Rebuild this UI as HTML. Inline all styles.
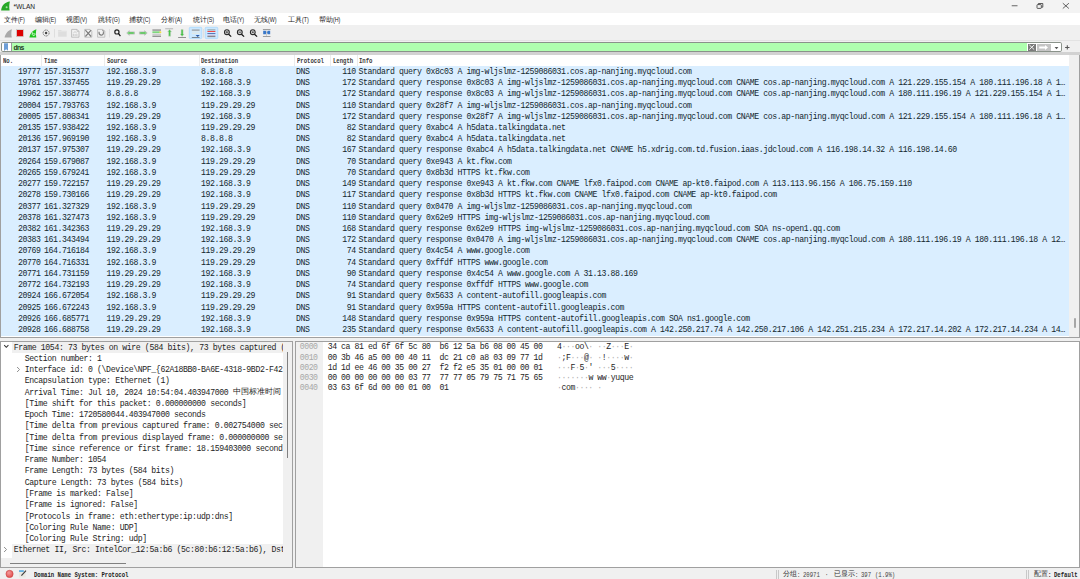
<!DOCTYPE html>
<html><head><meta charset="utf-8"><style>
*{margin:0;padding:0;box-sizing:border-box}
html,body{width:1080px;height:579px;overflow:hidden;background:#f0f0f0;font-family:"Liberation Sans",sans-serif}
.abs{position:absolute}
#title{position:absolute;left:0;top:0;width:1080px;height:12.8px;background:#f3f3f3}
#title .t{position:absolute;left:13.5px;top:2.5px;font-size:6.6px;color:#222;line-height:8px}
#menu{position:absolute;left:0;top:13px;width:1080px;height:12px;background:#fff}
.mi{position:absolute;top:2.5px;font-size:7.1px;line-height:9px;color:#1a1a1a;white-space:nowrap}
.mk{display:inline-block;position:relative;top:-0.9px;font-size:7.6px;line-height:9px;vertical-align:top;transform:scaleX(0.7);transform-origin:0 50%}
#tb{position:absolute;left:0;top:25px;width:1080px;height:15.5px;background:#f0f0f0;border-bottom:1px solid #e3e3e3}
#filter{position:absolute;left:0;top:40.5px;width:1080px;height:14px;background:#f0f0f0}
#fbox{position:absolute;left:0.8px;top:1.7px;width:1061.5px;height:9.8px;border:1px solid #8a928a;border-radius:1.8px;background:#fff}
#fgreen{position:absolute;left:10px;top:0;width:1015.4px;height:100%;background:#afffaf}
#plist{position:absolute;left:0;top:54.5px;width:1080px;height:283.5px;background:#fff;border:1px solid #a0a0a0;border-top:none;overflow:hidden}
#hdr{position:absolute;left:0;top:0;width:1068.4px;height:11.4px;background:#fff}
.hd{position:absolute;top:2px;font-family:"Liberation Mono",monospace;font-weight:bold;font-size:7.6px;line-height:8px;color:#3a3a3a;white-space:nowrap;transform:scaleX(0.74);transform-origin:0 50%}
.hs{position:absolute;top:0;width:0.8px;height:11.4px;background:#ececec}
.pr{position:absolute;left:0;width:1068.4px;height:12px;background:#daeeff;font-family:"Liberation Mono",monospace;font-size:8.2px;line-height:11.22px;color:#12272e;white-space:nowrap;letter-spacing:-0.415px}
.pr .c{position:absolute;top:0}
.no{right:1029px;text-align:right}
.tm{left:42.9px}
.src{left:105.6px}
.dst{left:200.1px}
.pro{left:295px}
.len{right:713.6px;text-align:right}
.inf{left:357.5px}
#vsb{position:absolute;left:1068.4px;top:0;width:10.6px;height:283px;background:#f0f0f0}
#details{position:absolute;left:0;top:340.8px;width:292.5px;height:227.2px;background:#fff;border:1px solid #a0a0a0;overflow:hidden}
.dr{position:absolute;left:0;width:282px;height:11.26px;font-family:"Liberation Mono",monospace;font-size:8.2px;line-height:11.26px;color:#1e1e1e;white-space:nowrap;letter-spacing:-0.39px}
.dr.bg::before{content:"";position:absolute;left:11px;top:0;width:271px;height:100%;background:#f0f0f0}
.dt{position:absolute;top:0}
.dr.tall::before{height:14px}
.cjk{font-family:"Liberation Sans",sans-serif;font-size:8.4px;letter-spacing:0.05px;position:relative;top:-0.5px}
.dot{color:#b0b0b0;font-style:normal}
.arr{position:absolute}
#bytes{position:absolute;left:295px;top:340.8px;width:785px;height:227.2px;background:#fff;border:1px solid #a0a0a0;overflow:hidden}
#offbg{position:absolute;left:0;top:0;width:27px;height:100%;background:#f0f0f0}
.hr{position:absolute;left:0;width:780px;height:10.15px;font-family:"Liberation Mono",monospace;font-size:8.2px;line-height:10.15px;color:#1e1e1e;white-space:nowrap;letter-spacing:-0.44px}
.hr span{position:absolute;top:0;white-space:pre}
.ho{left:3.7px;color:#a8a8a8}
.hx{left:31.7px}
.ha{left:261px}
#status{position:absolute;left:0;top:568px;width:1080px;height:11px;background:#f0f0f0}
.st{position:absolute;top:2.8px;font-family:"Liberation Mono",monospace;font-weight:bold;font-size:7.6px;line-height:8px;color:#222;white-space:nowrap;transform:scaleX(0.74);transform-origin:0 50%}
.sc{position:absolute;top:2.2px;font-size:6.9px;line-height:8px;color:#333;white-space:nowrap}
</style></head><body>
<div id="title">
<svg class="abs" style="left:0;top:0" width="12" height="12" viewBox="0 0 12 12"><path d="M1.1 10.6 C1.6 5.6 5 2.2 9.9 1.6 C9.1 4.5 9.1 7.8 9.6 10.6 Z" fill="#27a827"/><circle cx="6.6" cy="7.2" r="1" fill="#a8e0a8"/></svg>
<span class="t">*WLAN</span>
<svg class="abs" style="left:0;top:0" width="1080" height="13" viewBox="0 0 1080 13">
<rect x="1011.7" y="5.4" width="5.8" height="0.8" fill="#444"/>
<rect x="1037" y="4.6" width="4.3" height="3.8" rx="0.6" fill="none" stroke="#333" stroke-width="0.8"/>
<path d="M1038.4 4.5 V3.5 H1042.8 V7.2 H1041.6" fill="none" stroke="#333" stroke-width="0.8"/>
<path d="M1062.8 3.2 L1068.9 8.5 M1068.9 3.2 L1062.8 8.5" stroke="#333" stroke-width="0.75"/>
</svg>
</div>
<div id="menu"><span class="mi" style="left:4px">文件<span class="mk">(F)</span></span><span class="mi" style="left:35px">编辑<span class="mk">(E)</span></span><span class="mi" style="left:66px">视图<span class="mk">(V)</span></span><span class="mi" style="left:97.5px">跳转<span class="mk">(G)</span></span><span class="mi" style="left:129px">捕获<span class="mk">(C)</span></span><span class="mi" style="left:161px">分析<span class="mk">(A)</span></span><span class="mi" style="left:192.5px">统计<span class="mk">(S)</span></span><span class="mi" style="left:223px">电话<span class="mk">(Y)</span></span><span class="mi" style="left:254px">无线<span class="mk">(W)</span></span><span class="mi" style="left:288px">工具<span class="mk">(T)</span></span><span class="mi" style="left:319px">帮助<span class="mk">(H)</span></span></div>
<div id="tb"><svg style="position:absolute;left:0;top:0" width="280" height="16" viewBox="0 25 280 16">
<!-- 1 gray fin -->
<path d="M4.6 37.4 C5.5 33.5 8 30.2 11.9 29.2 C11.2 31.8 11.2 34.8 11.8 37.4 Z" fill="#a9a9a9"/>
<!-- 2 red square -->
<rect x="16.4" y="29.5" width="7.2" height="7.2" fill="none" stroke="#c8c8c8" stroke-width="0.7"/>
<rect x="16.9" y="30" width="6.2" height="6.2" fill="#dd0000"/>
<!-- 3 green fin -->
<path d="M29.4 37.4 C30.2 33.6 32.6 30.3 36.4 29.3 C35.8 31.8 35.8 34.8 36.3 37.4 Z" fill="#21c421"/>
<path d="M32.4 33.6 A1.4 1.4 0 1 0 34.6 33.2" fill="none" stroke="#e8ffe8" stroke-width="0.8"/>
<path d="M32.3 32 V33.8 H34" fill="none" stroke="#e8ffe8" stroke-width="0.7"/>
<!-- 4 gear -->
<circle cx="46.1" cy="33" r="3" fill="none" stroke="#777" stroke-width="1" stroke-dasharray="1.3 0.5"/>
<circle cx="46.1" cy="33" r="1.2" fill="#444"/>
<!-- sep -->
<rect x="54.1" y="29" width="0.7" height="8.5" fill="#d6d6d6"/>
<!-- 5 folder -->
<path d="M58.1 30 H61 L61.8 30.8 H66.7 V36.7 H58.1 Z" fill="#dedede"/>
<rect x="58.1" y="30.9" width="8.6" height="0.6" fill="#e9e9e9"/>
<!-- 6 file -->
<path d="M71.6 29.4 H77 L79 31.4 V37.2 H71.6 Z" fill="#f2f2f2" stroke="#b4b4b4" stroke-width="0.8"/>
<path d="M77 29.4 V31.4 H79" fill="none" stroke="#b4b4b4" stroke-width="0.6"/>
<path d="M72.8 35 h1 M74.6 35 h1 M76.4 35 h1" stroke="#9a9a9a" stroke-width="0.9"/>
<path d="M73.3 33 L75 31.6 L76.7 33" fill="none" stroke="#bdbdbd" stroke-width="0.7"/>
<!-- 7 x file -->
<path d="M84.7 29.4 H90 L91.8 31.2 V37.2 H84.7 Z" fill="#f2f2f2" stroke="#b4b4b4" stroke-width="0.8"/>
<path d="M85.4 30.2 L91.1 36.5 M91.1 30.2 L85.4 36.5" stroke="#7a7a7a" stroke-width="1.15"/>
<!-- 8 reload file -->
<path d="M97.6 29.4 H103 L104.8 31.2 V37.2 H97.6 Z" fill="#f2f2f2" stroke="#b4b4b4" stroke-width="0.8"/>
<path d="M99.3 31.8 A2.2 2.2 0 1 0 103.3 32.2" fill="none" stroke="#7a7a7a" stroke-width="1.2"/>
<path d="M102 30.6 L103.8 30.8 L103.5 32.8" fill="none" stroke="#7a7a7a" stroke-width="0.7"/>
<!-- sep -->
<rect x="109.3" y="29" width="0.7" height="8.5" fill="#d6d6d6"/>
<!-- 9 magnifier -->
<circle cx="116.9" cy="31.9" r="2.1" fill="none" stroke="#222" stroke-width="1.2"/>
<path d="M118.4 33.4 L120.4 36.2" stroke="#111" stroke-width="1.2"/>
<!-- 10 left arrow -->
<path d="M126.7 33 L129.3 30.7 V31.9 H134.5 V34.1 H129.3 V35.3 Z" fill="#8fdc8f" stroke="#b8b8b8" stroke-width="0.7"/>
<path d="M128.6 33 h5" stroke="#4cbf4c" stroke-width="1.1"/>
<!-- 11 right arrow -->
<path d="M147.2 33 L144.6 30.7 V31.9 H139.4 V34.1 H144.6 V35.3 Z" fill="#8fdc8f" stroke="#b8b8b8" stroke-width="0.7"/>
<path d="M140.3 33 h5" stroke="#4cbf4c" stroke-width="1.1"/>
<!-- 12 jump list -->
<rect x="152.4" y="29.5" width="8.6" height="1.1" fill="#7a7a7a"/>
<rect x="152.4" y="31.3" width="7.4" height="1.8" fill="#7fd87f"/>
<circle cx="160.4" cy="32.2" r="0.95" fill="#f2e040"/>
<rect x="152.4" y="33.8" width="8.6" height="0.9" fill="#bdbdbd"/>
<rect x="152.4" y="35.6" width="8.6" height="1.3" fill="#8a8a8a"/>
<!-- 13 up arrow -->
<rect x="165.2" y="28.5" width="7.9" height="0.7" fill="#9a9a9a"/>
<path d="M169.6 29.5 L171.6 31.8 H170.6 V36.2 H168.6 V31.8 H167.6 Z" fill="#43c443" stroke="#cfcfcf" stroke-width="0.5"/>
<!-- 14 down arrow -->
<rect x="178.1" y="37.2" width="7.9" height="0.8" fill="#7a7a7a"/>
<path d="M182.1 36.4 L184.1 34 H183.1 V29.6 H181.1 V34 H180.1 Z" fill="#43c443" stroke="#cfcfcf" stroke-width="0.5"/>
<!-- 15 autoscroll button -->
<rect x="189.3" y="27.3" width="12.5" height="11.3" rx="1" fill="#cce8ff" stroke="#99d1ff" stroke-width="0.6"/>
<rect x="191.8" y="29.5" width="7.8" height="1.2" fill="#9a9a9a"/>
<rect x="191.8" y="31.5" width="7.8" height="0.8" fill="#e8e8e0"/>
<rect x="191.8" y="33.2" width="7.8" height="0.8" fill="#e8e8e0"/>
<path d="M195.6 35 H199.8 L197.7 37 Z" fill="#2a5aa8"/>
<rect x="191.8" y="37.2" width="7.8" height="0.6" fill="#444"/>
<!-- sep -->
<rect x="203.3" y="29" width="0.6" height="8.5" fill="#d6d6d6"/>
<!-- 16 colorize -->
<rect x="205.2" y="27.3" width="12.6" height="11.3" rx="1" fill="#cce8ff" stroke="#99d1ff" stroke-width="0.6"/>
<rect x="207.4" y="29.4" width="8" height="1" fill="#8fa0a0"/>
<rect x="207.4" y="31" width="8" height="1" fill="#f04a4a"/>
<rect x="207.4" y="33" width="8" height="0.9" fill="#4a6ab0"/>
<rect x="207.4" y="34.8" width="8" height="1" fill="#c0a8c8"/>
<rect x="207.4" y="36.1" width="8" height="1" fill="#808080"/>
<!-- 17-19 zooms -->
<g fill="#dcdcdc" stroke="#2a2a2a">
<circle cx="226.9" cy="32.2" r="2.4" stroke-width="1.1"/>
<circle cx="239.8" cy="32.2" r="2.4" stroke-width="1.1"/>
<circle cx="252.8" cy="32.2" r="2.4" stroke-width="1.1"/>
</g>
<g stroke="#111" stroke-width="1.2">
<path d="M228.6 34.2 L231.2 36.6"/><path d="M241.5 34.2 L244.1 36.6"/><path d="M254.5 34.2 L257.1 36.6"/>
</g>
<path d="M225.7 32.2 h2.4 M226.9 31 v2.4" stroke="#333" stroke-width="0.7"/>
<path d="M238.6 32.2 h2.4" stroke="#333" stroke-width="0.8"/>
<rect x="251.9" y="31.4" width="1.8" height="1.6" fill="#555"/>
<!-- 20 resize columns -->
<rect x="262.9" y="29.2" width="7.6" height="0.8" fill="#8a8a8a"/>
<rect x="262.9" y="36.1" width="7.6" height="0.8" fill="#8a8a8a"/>
<path d="M263.2 30.8 H265.8 L266.3 32.5 L265.8 34.3 H263.2 Z" fill="#3a78c8"/>
<path d="M270.2 30.8 H267.6 L267.1 32.5 L267.6 34.3 H270.2 Z" fill="#3a78c8"/>
<rect x="266.5" y="30.5" width="0.5" height="5.5" fill="#aaa"/>
</svg>
</div>
<div id="filter">
<div id="fbox"><div style="position:absolute;left:2.2px;top:0px;width:4.4px;height:7.8px;background:#6d9ed6;clip-path:polygon(0 0,100% 0,100% 100%,50% 78%,0 100%)"></div><div style="position:absolute;left:9.2px;top:0;width:0.8px;height:100%;background:#9a9a9a"></div>
<div id="fgreen"><span style="position:absolute;left:1.6px;top:-0.6px;font-family:'Liberation Sans',sans-serif;font-weight:bold;font-size:6.8px;line-height:9px;color:#1e3a1e;letter-spacing:-0.55px">dns</span></div>
<div style="position:absolute;left:1026.3px;top:1.2px;width:7.5px;height:6.5px;background:#7a7a7a"><svg style="position:absolute;left:0;top:0" width="7.5" height="6.5" viewBox="0 0 7.5 6.5"><path d="M1.3 0.9 L6.2 5.6 M6.2 0.9 L1.3 5.6" stroke="#fff" stroke-width="0.9"/></svg></div>
<div style="position:absolute;left:1035.6px;top:0.9px;width:13.2px;height:7px;background:#c4c4c4"><svg style="position:absolute;left:0;top:0" width="13" height="7" viewBox="0 0 13 7"><path d="M2.2 2.6 H8 V1.1 L11 3.5 L8 5.9 V4.4 H2.2 Z" fill="#fff"/></svg></div>
<svg style="position:absolute;left:1052.6px;top:2.8px" width="5" height="4" viewBox="0 0 5 4"><path d="M0.6 1 H4.4 L2.5 3.2 Z" fill="#555"/></svg>
</div>
<svg class="abs" style="left:1064.6px;top:4.6px" width="5" height="5" viewBox="0 0 5 5"><path d="M2.3 0.2 V4.6 M0.1 2.4 H4.5" stroke="#555" stroke-width="1.05"/></svg><div class="abs" style="left:0;top:11.6px;width:1080px;height:2.5px;background:#d2d2d2"></div>
</div>
<div id="plist">
<div id="hdr">
<span class="hd" style="left:1.90px">No.</span>
<span class="hs" style="left:40px"></span>
<span class="hd" style="left:43.40px">Time</span>
<span class="hs" style="left:103.3px"></span>
<span class="hd" style="left:106.40px">Source</span>
<span class="hs" style="left:198.3px"></span>
<span class="hd" style="left:200.30px">Destination</span>
<span class="hs" style="left:293px"></span>
<span class="hd" style="left:295.60px">Protocol</span>
<span class="hs" style="left:328.7px"></span>
<span class="hd" style="left:331.70px">Length</span>
<span class="hs" style="left:355.5px"></span>
<span class="hd" style="left:358.10px">Info</span>
</div>
<div style="position:absolute;left:0;top:-54.5px">
<div class="pr" style="top:65.90px"><span class="c no">19777</span><span class="c tm">157.315377</span><span class="c src">192.168.3.9</span><span class="c dst">8.8.8.8</span><span class="c pro">DNS</span><span class="c len">110</span><span class="c inf">Standard query 0x8c03 A img-wljslmz-1259086031.cos.ap-nanjing.myqcloud.com</span></div>
<div class="pr" style="top:77.12px"><span class="c no">19781</span><span class="c tm">157.337455</span><span class="c src">119.29.29.29</span><span class="c dst">192.168.3.9</span><span class="c pro">DNS</span><span class="c len">172</span><span class="c inf">Standard query response 0x8c03 A img-wljslmz-1259086031.cos.ap-nanjing.myqcloud.com CNAME cos.ap-nanjing.myqcloud.com A 121.229.155.154 A 180.111.196.18 A 1…</span></div>
<div class="pr" style="top:88.34px"><span class="c no">19962</span><span class="c tm">157.388774</span><span class="c src">8.8.8.8</span><span class="c dst">192.168.3.9</span><span class="c pro">DNS</span><span class="c len">172</span><span class="c inf">Standard query response 0x8c03 A img-wljslmz-1259086031.cos.ap-nanjing.myqcloud.com CNAME cos.ap-nanjing.myqcloud.com A 180.111.196.19 A 121.229.155.154 A 1…</span></div>
<div class="pr" style="top:99.56px"><span class="c no">20004</span><span class="c tm">157.793763</span><span class="c src">192.168.3.9</span><span class="c dst">119.29.29.29</span><span class="c pro">DNS</span><span class="c len">110</span><span class="c inf">Standard query 0x28f7 A img-wljslmz-1259086031.cos.ap-nanjing.myqcloud.com</span></div>
<div class="pr" style="top:110.78px"><span class="c no">20005</span><span class="c tm">157.808341</span><span class="c src">119.29.29.29</span><span class="c dst">192.168.3.9</span><span class="c pro">DNS</span><span class="c len">172</span><span class="c inf">Standard query response 0x28f7 A img-wljslmz-1259086031.cos.ap-nanjing.myqcloud.com CNAME cos.ap-nanjing.myqcloud.com A 121.229.155.154 A 180.111.196.18 A 1…</span></div>
<div class="pr" style="top:122.00px"><span class="c no">20135</span><span class="c tm">157.938422</span><span class="c src">192.168.3.9</span><span class="c dst">119.29.29.29</span><span class="c pro">DNS</span><span class="c len">82</span><span class="c inf">Standard query 0xabc4 A h5data.talkingdata.net</span></div>
<div class="pr" style="top:133.22px"><span class="c no">20136</span><span class="c tm">157.969190</span><span class="c src">192.168.3.9</span><span class="c dst">8.8.8.8</span><span class="c pro">DNS</span><span class="c len">82</span><span class="c inf">Standard query 0xabc4 A h5data.talkingdata.net</span></div>
<div class="pr" style="top:144.44px"><span class="c no">20137</span><span class="c tm">157.975307</span><span class="c src">119.29.29.29</span><span class="c dst">192.168.3.9</span><span class="c pro">DNS</span><span class="c len">167</span><span class="c inf">Standard query response 0xabc4 A h5data.talkingdata.net CNAME h5.xdrig.com.td.fusion.iaas.jdcloud.com A 116.198.14.32 A 116.198.14.60</span></div>
<div class="pr" style="top:155.66px"><span class="c no">20264</span><span class="c tm">159.679087</span><span class="c src">192.168.3.9</span><span class="c dst">119.29.29.29</span><span class="c pro">DNS</span><span class="c len">70</span><span class="c inf">Standard query 0xe943 A kt.fkw.com</span></div>
<div class="pr" style="top:166.88px"><span class="c no">20265</span><span class="c tm">159.679241</span><span class="c src">192.168.3.9</span><span class="c dst">119.29.29.29</span><span class="c pro">DNS</span><span class="c len">70</span><span class="c inf">Standard query 0x8b3d HTTPS kt.fkw.com</span></div>
<div class="pr" style="top:178.10px"><span class="c no">20277</span><span class="c tm">159.722157</span><span class="c src">119.29.29.29</span><span class="c dst">192.168.3.9</span><span class="c pro">DNS</span><span class="c len">149</span><span class="c inf">Standard query response 0xe943 A kt.fkw.com CNAME lfx0.faipod.com CNAME ap-kt0.faipod.com A 113.113.96.156 A 106.75.159.110</span></div>
<div class="pr" style="top:189.32px"><span class="c no">20278</span><span class="c tm">159.730166</span><span class="c src">119.29.29.29</span><span class="c dst">192.168.3.9</span><span class="c pro">DNS</span><span class="c len">117</span><span class="c inf">Standard query response 0x8b3d HTTPS kt.fkw.com CNAME lfx0.faipod.com CNAME ap-kt0.faipod.com</span></div>
<div class="pr" style="top:200.54px"><span class="c no">20377</span><span class="c tm">161.327329</span><span class="c src">192.168.3.9</span><span class="c dst">119.29.29.29</span><span class="c pro">DNS</span><span class="c len">110</span><span class="c inf">Standard query 0x0470 A img-wljslmz-1259086031.cos.ap-nanjing.myqcloud.com</span></div>
<div class="pr" style="top:211.76px"><span class="c no">20378</span><span class="c tm">161.327473</span><span class="c src">192.168.3.9</span><span class="c dst">119.29.29.29</span><span class="c pro">DNS</span><span class="c len">110</span><span class="c inf">Standard query 0x62e9 HTTPS img-wljslmz-1259086031.cos.ap-nanjing.myqcloud.com</span></div>
<div class="pr" style="top:222.98px"><span class="c no">20382</span><span class="c tm">161.342363</span><span class="c src">119.29.29.29</span><span class="c dst">192.168.3.9</span><span class="c pro">DNS</span><span class="c len">168</span><span class="c inf">Standard query response 0x62e9 HTTPS img-wljslmz-1259086031.cos.ap-nanjing.myqcloud.com SOA ns-open1.qq.com</span></div>
<div class="pr" style="top:234.20px"><span class="c no">20383</span><span class="c tm">161.343494</span><span class="c src">119.29.29.29</span><span class="c dst">192.168.3.9</span><span class="c pro">DNS</span><span class="c len">172</span><span class="c inf">Standard query response 0x0470 A img-wljslmz-1259086031.cos.ap-nanjing.myqcloud.com CNAME cos.ap-nanjing.myqcloud.com A 180.111.196.19 A 180.111.196.18 A 12…</span></div>
<div class="pr" style="top:245.42px"><span class="c no">20769</span><span class="c tm">164.716184</span><span class="c src">192.168.3.9</span><span class="c dst">119.29.29.29</span><span class="c pro">DNS</span><span class="c len">74</span><span class="c inf">Standard query 0x4c54 A www.google.com</span></div>
<div class="pr" style="top:256.64px"><span class="c no">20770</span><span class="c tm">164.716331</span><span class="c src">192.168.3.9</span><span class="c dst">119.29.29.29</span><span class="c pro">DNS</span><span class="c len">74</span><span class="c inf">Standard query 0xffdf HTTPS www.google.com</span></div>
<div class="pr" style="top:267.86px"><span class="c no">20771</span><span class="c tm">164.731159</span><span class="c src">119.29.29.29</span><span class="c dst">192.168.3.9</span><span class="c pro">DNS</span><span class="c len">90</span><span class="c inf">Standard query response 0x4c54 A www.google.com A 31.13.88.169</span></div>
<div class="pr" style="top:279.08px"><span class="c no">20772</span><span class="c tm">164.732193</span><span class="c src">119.29.29.29</span><span class="c dst">192.168.3.9</span><span class="c pro">DNS</span><span class="c len">74</span><span class="c inf">Standard query response 0xffdf HTTPS www.google.com</span></div>
<div class="pr" style="top:290.30px"><span class="c no">20924</span><span class="c tm">166.672054</span><span class="c src">192.168.3.9</span><span class="c dst">119.29.29.29</span><span class="c pro">DNS</span><span class="c len">91</span><span class="c inf">Standard query 0x5633 A content-autofill.googleapis.com</span></div>
<div class="pr" style="top:301.52px"><span class="c no">20925</span><span class="c tm">166.672243</span><span class="c src">192.168.3.9</span><span class="c dst">119.29.29.29</span><span class="c pro">DNS</span><span class="c len">91</span><span class="c inf">Standard query 0x959a HTTPS content-autofill.googleapis.com</span></div>
<div class="pr" style="top:312.74px"><span class="c no">20926</span><span class="c tm">166.685771</span><span class="c src">119.29.29.29</span><span class="c dst">192.168.3.9</span><span class="c pro">DNS</span><span class="c len">148</span><span class="c inf">Standard query response 0x959a HTTPS content-autofill.googleapis.com SOA ns1.google.com</span></div>
<div class="pr" style="top:323.96px"><span class="c no">20928</span><span class="c tm">166.688758</span><span class="c src">119.29.29.29</span><span class="c dst">192.168.3.9</span><span class="c pro">DNS</span><span class="c len">235</span><span class="c inf">Standard query response 0x5633 A content-autofill.googleapis.com A 142.250.217.74 A 142.250.217.106 A 142.251.215.234 A 172.217.14.202 A 172.217.14.234 A 14…</span></div>
</div>
<div id="vsb"><div style="position:absolute;left:4.5px;top:263px;width:2.2px;height:10px;border-radius:1px;background:#a6a6a6"></div></div>
</div>
<div id="details">
<div style="position:absolute;left:0;top:-341.8px">
<div class="dr bg" style="top:341.60px"><svg class="arr" style="left:1.6px;top:2.6px" width="7" height="5" viewBox="0 0 7 5"><path d="M1.2 1.2 L3.3 3.3 L5.4 1.2" fill="none" stroke="#333" stroke-width="1.05"/></svg><span class="dt" style="left:12.7px">Frame 1054: 73 bytes on wire (584 bits), 73 bytes captured (</span></div>
<div class="dr" style="top:352.86px"><span class="dt" style="left:23.7px">Section number: 1</span></div>
<div class="dr" style="top:364.12px"><svg class="arr" style="left:14.5px;top:2px" width="5" height="7" viewBox="0 0 5 7"><path d="M1.1 1 L3.5 3.5 L1.1 6" fill="none" stroke="#888" stroke-width="0.95"/></svg><span class="dt" style="left:23.7px">Interface id: 0 (\Device\NPF_{62A18BB0-BA6E-4318-9BD2-F42</span></div>
<div class="dr" style="top:375.38px"><span class="dt" style="left:23.7px">Encapsulation type: Ethernet (1)</span></div>
<div class="dr" style="top:386.64px"><span class="dt" style="left:23.7px">Arrival Time: Jul 10, 2024 10:54:04.403947000 <span class="cjk">中国标准时间</span></span></div>
<div class="dr" style="top:397.90px"><span class="dt" style="left:23.7px">[Time shift for this packet: 0.000000000 seconds]</span></div>
<div class="dr" style="top:409.16px"><span class="dt" style="left:23.7px">Epoch Time: 1720580044.403947000 seconds</span></div>
<div class="dr" style="top:420.42px"><span class="dt" style="left:23.7px">[Time delta from previous captured frame: 0.002754000 sec</span></div>
<div class="dr" style="top:431.68px"><span class="dt" style="left:23.7px">[Time delta from previous displayed frame: 0.000000000 se</span></div>
<div class="dr" style="top:442.94px"><span class="dt" style="left:23.7px">[Time since reference or first frame: 18.159403000 second</span></div>
<div class="dr" style="top:454.20px"><span class="dt" style="left:23.7px">Frame Number: 1054</span></div>
<div class="dr" style="top:465.46px"><span class="dt" style="left:23.7px">Frame Length: 73 bytes (584 bits)</span></div>
<div class="dr" style="top:476.72px"><span class="dt" style="left:23.7px">Capture Length: 73 bytes (584 bits)</span></div>
<div class="dr" style="top:487.98px"><span class="dt" style="left:23.7px">[Frame is marked: False]</span></div>
<div class="dr" style="top:499.24px"><span class="dt" style="left:23.7px">[Frame is ignored: False]</span></div>
<div class="dr" style="top:510.50px"><span class="dt" style="left:23.7px">[Protocols in frame: eth:ethertype:ip:udp:dns]</span></div>
<div class="dr" style="top:521.76px"><span class="dt" style="left:23.7px">[Coloring Rule Name: UDP]</span></div>
<div class="dr" style="top:533.02px"><span class="dt" style="left:23.7px">[Coloring Rule String: udp]</span></div>
<div class="dr bg tall" style="top:544.28px"><svg class="arr" style="left:2.3px;top:2px" width="5" height="7" viewBox="0 0 5 7"><path d="M1.1 1 L3.5 3.5 L1.1 6" fill="none" stroke="#888" stroke-width="0.95"/></svg><span class="dt" style="left:12.7px">Ethernet II, Src: IntelCor_12:5a:b6 (5c:80:b6:12:5a:b6), Dst</span></div>
</div>
<div style="position:absolute;left:282px;top:0;width:10px;height:100%;background:#f0f0f0"></div>
<div style="position:absolute;left:285.8px;top:10px;width:1px;height:106px;background:#808080"></div>
<div style="position:absolute;left:0;top:215.8px;width:282px;height:12px;background:#f0f0f0"></div>
<div style="position:absolute;left:9px;top:220.8px;width:116px;height:1px;background:#808080"></div>
</div>
<div id="bytes"><div id="offbg"></div>
<div style="position:absolute;left:0;top:-340.8px">
<div class="hr" style="top:341.40px"><span class="ho">0000</span><span class="hx">34 ca 81 ed 6f 6f 5c 80  b6 12 5a b6 08 00 45 00</span><span class="ha">4<i class="dot">·</i><i class="dot">·</i><i class="dot">·</i>oo\<i class="dot">·</i> <i class="dot">·</i><i class="dot">·</i>Z<i class="dot">·</i><i class="dot">·</i><i class="dot">·</i>E<i class="dot">·</i></span></div>
<div class="hr" style="top:351.55px"><span class="ho">0010</span><span class="hx">00 3b 46 a5 00 00 40 11  dc 21 c0 a8 03 09 77 1d</span><span class="ha"><i class="dot">·</i>;F<i class="dot">·</i><i class="dot">·</i><i class="dot">·</i>@<i class="dot">·</i> <i class="dot">·</i>!<i class="dot">·</i><i class="dot">·</i><i class="dot">·</i><i class="dot">·</i>w<i class="dot">·</i></span></div>
<div class="hr" style="top:361.70px"><span class="ho">0020</span><span class="hx">1d 1d ee 46 00 35 00 27  f2 f2 e5 35 01 00 00 01</span><span class="ha"><i class="dot">·</i><i class="dot">·</i><i class="dot">·</i>F<i class="dot">·</i>5<i class="dot">·</i>&#x27; <i class="dot">·</i><i class="dot">·</i><i class="dot">·</i>5<i class="dot">·</i><i class="dot">·</i><i class="dot">·</i><i class="dot">·</i></span></div>
<div class="hr" style="top:371.85px"><span class="ho">0030</span><span class="hx">00 00 00 00 00 00 03 77  77 77 05 79 75 71 75 65</span><span class="ha"><i class="dot">·</i><i class="dot">·</i><i class="dot">·</i><i class="dot">·</i><i class="dot">·</i><i class="dot">·</i><i class="dot">·</i>w ww<i class="dot">·</i>yuque</span></div>
<div class="hr" style="top:382.00px"><span class="ho">0040</span><span class="hx">03 63 6f 6d 00 00 01 00  01</span><span class="ha"><i class="dot">·</i>com<i class="dot">·</i><i class="dot">·</i><i class="dot">·</i><i class="dot">·</i> <i class="dot">·</i></span></div>
</div>
</div>
<div id="status">
<svg class="abs" style="left:0;top:-2px" width="40" height="13" viewBox="0 566 40 13">
<defs><radialGradient id="rg" cx="0.4" cy="0.35" r="0.7"><stop offset="0" stop-color="#f49a9a"/><stop offset="1" stop-color="#e04a4a"/></radialGradient></defs>
<circle cx="9.55" cy="573.9" r="3.6" fill="url(#rg)" stroke="#c84040" stroke-width="0.6"/>
<rect x="19" y="570.4" width="6.6" height="7" fill="#e9e9e2"/>
<rect x="19" y="570.4" width="4.8" height="1.3" fill="#2f9ae0"/>
<path d="M21.4 575.6 L26 570.6" stroke="#3a3a3a" stroke-width="1.1"/>
</svg>
<span class="st" style="left:34px">Domain Name System: Protocol</span>
<span class="abs" style="left:775.5px;top:2px;width:1px;height:9px;background:#c8c8c8"></span>
<span class="abs" style="left:777.5px;top:2px;width:1px;height:9px;background:#c8c8c8"></span>
<span class="sc" style="left:783px">分组</span><span class="st" style="font-weight:normal;color:#444;left:797px">:</span><span class="st" style="font-weight:normal;color:#444;left:803.3px">20971</span><span class="st" style="font-weight:normal;color:#444;left:825.2px">·</span><span class="sc" style="left:833.6px">已显示</span><span class="st" style="font-weight:normal;color:#444;left:854.5px">:</span><span class="st" style="font-weight:normal;color:#444;left:860.5px">397</span><span class="st" style="font-weight:normal;color:#444;left:875px">(1.9%)</span>
<span class="abs" style="left:1026px;top:2px;width:1px;height:9px;background:#c8c8c8"></span>
<span class="abs" style="left:1028px;top:2px;width:1px;height:9px;background:#c8c8c8"></span>
<span class="sc" style="left:1033.5px">配置</span><span class="st" style="left:1047.5px">:</span><span class="st" style="left:1053.6px">Default</span>
</div>
</body></html>
